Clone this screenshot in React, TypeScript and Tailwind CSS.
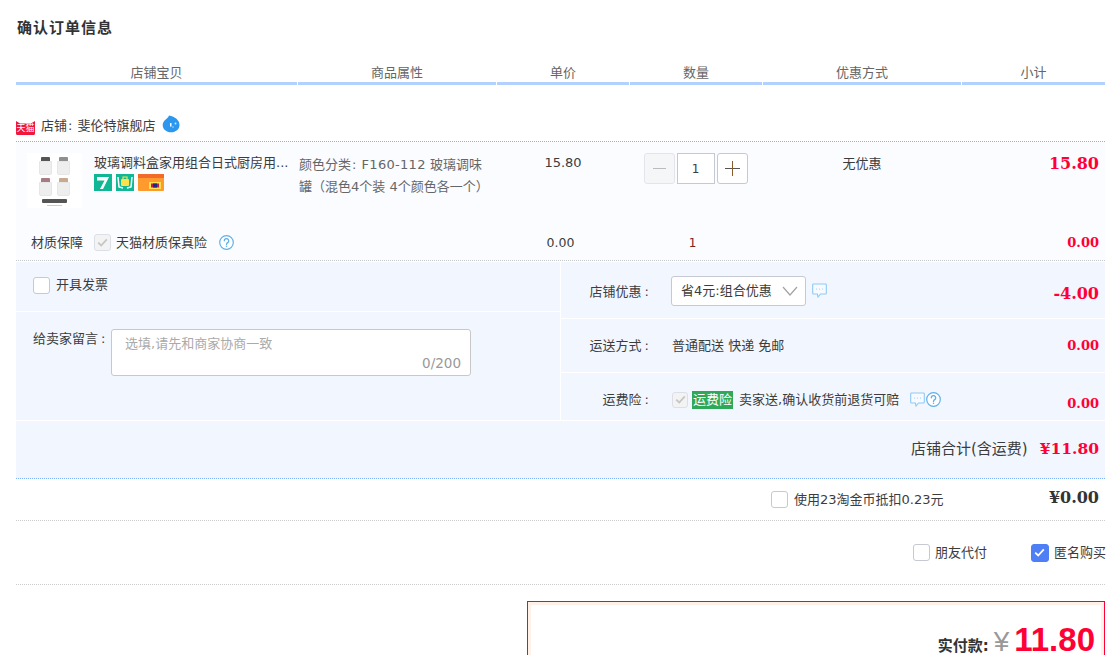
import React from "react";

const cols = "grid grid-cols-[281px_198px_132px_132px_198px_143px] gap-x-px";
const redNum = "[font-family:'DejaVu_Serif',serif] font-bold text-[#ff0036]";

function Bubble() {
  return (
    <svg width="15" height="15" viewBox="0 0 15 15" fill="none" className="shrink-0">
      <path d="M1.500 1h12a.8.8 0 0 1 .8.8v8.400a.8.8 0 0 1-.8.8H8.500L6 14l-.6-3H1.500a.8.8 0 0 1-.8-.8V1.800a.8.8 0 0 1 .8-.8z" stroke="#8ec9f5" strokeWidth="1.100" fill="#f7fbff" />
      <circle cx="4.500" cy="6" r=".6" fill="#8ec9f5" />
      <circle cx="7.500" cy="6" r=".6" fill="#8ec9f5" />
      <circle cx="10.500" cy="6" r=".6" fill="#8ec9f5" />
    </svg>
  );
}

function Help() {
  return (
    <svg width="15" height="15" viewBox="0 0 15 15" fill="none" className="shrink-0">
      <circle cx="7.500" cy="7.500" r="6.800" stroke="#5fb0ec" strokeWidth="1.200" fill="#fff" />
      <path d="M5.300 5.800a2.200 2.200 0 1 1 3.400 1.800c-.8.500-1.200.9-1.200 1.800" stroke="#5fb0ec" strokeWidth="1.300" strokeLinecap="round" />
      <circle cx="7.500" cy="11.300" r=".8" fill="#5fb0ec" />
    </svg>
  );
}

function Check({ state = "off", size = 17 }: { state?: "off" | "disabled" | "on"; size?: number }) {
  const box =
    state === "on"
      ? "bg-[#4f7ff5] border-[#4f7ff5]"
      : state === "disabled"
      ? "bg-[#f3f3f3] border-[#dcdfe6]"
      : "bg-white border-[#c5c9d3]";
  return (
    <span
      style={{ width: size, height: size }}
      className={`shrink-0 flex items-center justify-center rounded-[3px] border ${box}`}
    >
      {state !== "off" && (
        <svg width="11" height="9" viewBox="0 0 11 9" fill="none">
          <path d="M1.200 4.600 4.200 7.500 9.800 1.300" stroke={state === "on" ? "#fff" : "#c6c6c6"} strokeWidth="1.800" />
        </svg>
      )}
    </span>
  );
}

function Bottle({ cap }: { cap: string }) {
  return (
    <div className="w-[13px] h-[18px] flex flex-col items-center">
      <div className="w-[9px] h-[4px] rounded-t-[1px]" style={{ background: cap }} />
      <div className="w-[13px] h-[14px] rounded-b-[2px] bg-[#eeeeee] border border-[#e6e6e6]" />
    </div>
  );
}

function Product() {
  return (
    <div className="w-[55px] h-[55px] shrink-0 bg-white flex flex-col items-center pt-[4px]">
      <div className="grid grid-cols-2 gap-x-[5px] gap-y-[3px]">
        <Bottle cap="#555" />
        <Bottle cap="#8f8f8f" />
        <Bottle cap="#a87a84" />
        <Bottle cap="#c7aa90" />
      </div>
      <div className="w-[25px] h-[4px] mt-[3px] rounded-[1px] bg-[#555]" />
      <div className="w-[15px] h-px mt-[2px] bg-[#ccc]" />
    </div>
  );
}

function TmallLogo() {
  return (
    <span className="relative w-[19px] h-[15px] shrink-0 block">
      <svg width="19" height="15" viewBox="0 0 19 15" className="block">
        <path d="M0 1 4 3.500H15L19 1V13.500a1.500 1.500 0 0 1-1.500 1.500H1.500A1.500 1.500 0 0 1 0 13.500Z" fill="#f0173c" />
      </svg>
      <span className="absolute left-0 right-0 top-[3px] text-center text-[9px] leading-[11px] text-white whitespace-nowrap">天猫</span>
    </span>
  );
}

function Wangwang() {
  return (
    <svg width="19" height="20" viewBox="0 0 19 20" className="shrink-0 block">
      <path d="M7 1.500C6.500 3 5.500 4 4 5.200 1.800 6.800.7 8.800.7 11c0 4.200 3.700 7.300 8.400 7.300s8.400-3.100 8.400-7.300C17.500 6 13 2.800 7 1.500Z" fill="#2b97ee" />
      <rect x="8" y="9" width="1.500" height="3.500" fill="#fff" />
      <circle cx="13.500" cy="9.500" r="1" fill="#cfe8fc" />
      <circle cx="11" cy="13" r=".7" fill="#cfe8fc" />
    </svg>
  );
}

function Badges() {
  return (
    <div className="flex items-center mt-[2px]">
      <svg width="18" height="17" viewBox="0 0 18 17" className="block mr-1">
        <rect width="18" height="17" fill="#0fb795" />
        <path d="M3 3H15L9 15H6L10.500 6.500H3Z" fill="#fff" />
      </svg>
      <svg width="18" height="17" viewBox="0 0 18 17" className="block mr-1">
        <rect width="18" height="17" fill="#0fb795" />
        <path d="M2 3 3 13 7 14" stroke="#fff" strokeWidth="1.500" fill="none" />
        <path d="M16 3 15 13 11 14" stroke="#fff" strokeWidth="1.500" fill="none" />
        <rect x="5" y="5" width="8" height="7" rx="1" fill="#ffe04d" />
        <path d="M7 5V3h4v2" stroke="#ffe04d" strokeWidth="1.200" fill="none" />
      </svg>
      <svg width="26" height="17" viewBox="0 0 26 17" className="block">
        <rect width="26" height="17" rx="1" fill="#ff9a2e" />
        <rect width="26" height="4" fill="#f26a2a" />
        <rect x="11" y="8" width="12" height="7" fill="#ffe04d" />
        <rect x="13" y="9.500" width="8" height="4" fill="#c01b4a" />
        <rect x="15" y="9.500" width="4" height="4" fill="#1b2a8a" />
      </svg>
    </div>
  );
}

export default function App() {
  return (
    <div className="w-[1112px] h-[655px] overflow-hidden bg-white pl-4 pr-[7px] text-[13px] leading-[18px] text-[#3c3c3c] [font-family:'DejaVu_Sans','Noto_Sans_CJK_SC',sans-serif]">
      <div className="w-[1089px]">
        <h1 className="pt-[18px] pl-px h-[63px] text-[15px] leading-5 font-bold tracking-[1px] text-[#333]">确认订单信息</h1>

        <div className={cols}>
          {["店铺宝贝", "商品属性", "单价", "数量", "优惠方式", "小计"].map((t) => (
            <div key={t} className="h-[22px] pt-[1px] text-center text-[#666] border-b-[3px] border-[#b2d1ff]">
              {t}
            </div>
          ))}
        </div>

        <div className="h-[57px] flex items-end border-b border-dotted border-[#80b2ff] pb-[6px]">
          <TmallLogo />
          <span className="ml-[6px] whitespace-nowrap">店铺<span className="mx-px">:</span> 斐伦特旗舰店</span>
          <span className="ml-[6px] mb-[1px]"><Wangwang /></span>
        </div>

        <div className="bg-[#fbfcff] h-[119px] border-b border-dotted border-[#c8c8c8] flex flex-col">
          <div className={`${cols} h-[83px] pt-[12px]`}>
            <div className="flex pl-[11px] -mt-px">
              <Product />
              <div className="ml-3 mt-[1px]">
                <div className="whitespace-nowrap">玻璃调料盒家用组合日式厨房用...</div>
                <Badges />
              </div>
            </div>
            <div className="pl-[1px] pr-2 leading-[22px] text-[#666]">颜色分类<span className="mx-px">:</span> <span className="tracking-[0.3px]">F160-112</span> 玻璃调味罐（混色4个装 4个颜色各一个）</div>
            <div className="text-center">15.80</div>
            <div className="flex justify-center gap-[2px] -mt-px pr-[1px]">
              <div className="w-[31px] h-[31px] rounded-[3px] border border-[#e3e5ea] bg-[#f5f6f7] flex items-center justify-center">
                <div className="w-[13px] h-px bg-[#bbb]" />
              </div>
              <div className="w-[38px] h-[31px] border border-[#c5c9d3] bg-white flex items-center justify-center text-[12px]">1</div>
              <div className="w-[31px] h-[31px] rounded-[3px] border border-[#c5c9d3] bg-white flex items-center justify-center relative">
                <div className="w-[15px] h-px bg-[#555]" />
                <div className="absolute w-px h-[15px] bg-[#8a5a2a]" />
              </div>
            </div>
            <div className="text-center pt-[1px]">无优惠</div>
            <div className={`${redNum} text-[16px] text-right pr-[6px] pt-[1px]`}>15.80</div>
          </div>
          <div className={`${cols} items-center h-[35px]`}>
            <div className="flex items-center pl-[15px]">
              <span>材质保障</span>
              <span className="ml-[11px]"><Check state="disabled" /></span>
              <span className="ml-[5px]">天猫材质保真险</span>
              <span className="ml-3"><Help /></span>
            </div>
            <div />
            <div className="text-center pr-[5px] text-[12.5px]">0.00</div>
            <div className="text-center pr-[7px] text-[12px] text-[#7a2020]">1</div>
            <div />
            <div className={`${redNum} text-[13px] text-right pr-[6px]`}>0.00</div>
          </div>
        </div>

        <div className="mt-px bg-[#f2f6fe] h-[217px] border-b border-dotted border-[#80b2ff] flex flex-col">
          <div className="flex h-[159px] border-b border-white">
            <div className="w-[545px] border-r border-white flex flex-col">
              <div className="h-[50px] border-b border-white flex items-center pl-[17px] pb-[3px]">
                <Check />
                <span className="ml-[6px]">开具发票</span>
              </div>
              <div className="flex pl-[17px] pt-[17px]">
                <span className="w-[78px] pt-[1px] whitespace-nowrap">给卖家留言<span className="ml-[3px]">:</span></span>
                <div className="w-[360px] h-[47px] bg-white border border-[#c8c8c8] rounded-[3px] relative pl-[13px] pt-[5px] text-[#aaa]">
                  选填,请先和商家协商一致
                  <span className="absolute right-[9px] bottom-[3px] text-[13.500px] text-[#999]">0/200</span>
                </div>
              </div>
            </div>
            <div className="flex-1 flex flex-col">
              <div className="h-[57px] border-b border-white flex items-center pt-[2px]">
                <span className="w-[88px] text-right shrink-0 mt-[1px]">店铺优惠<span className="ml-[3px]">:</span></span>
                <div className="ml-[22px] w-[135px] h-[30px] bg-white border border-[#c5c9d3] rounded-[3px] flex items-center pl-[9px] whitespace-nowrap">
                  省4元:组合优惠
                  <svg width="16" height="10" viewBox="0 0 16 10" fill="none" className="ml-[10px]">
                    <path d="M1 1 8 9 15 1" stroke="#a3a3a3" strokeWidth="1.200" />
                  </svg>
                </div>
                <span className="ml-[6px] -mt-[1px]"><Bubble /></span>
                <span className={`${redNum} text-[16px] ml-auto pr-[6px] mt-[5px]`}>-4.00</span>
              </div>
              <div className="h-[54px] border-b border-white flex items-center">
                <span className="w-[88px] text-right shrink-0">运送方式<span className="ml-[3px]">:</span></span>
                <span className="ml-[23px] whitespace-pre">普通配送 快递 免邮</span>
                <span className={`${redNum} text-[13px] ml-auto pr-[6px]`}>0.00</span>
              </div>
              <div className="flex-1 flex items-center pt-[6px]">
                <span className="w-[88px] text-right shrink-0">运费险<span className="ml-[3px]">:</span></span>
                <span className="ml-[23px]"><Check state="disabled" size={16} /></span>
                <span className="ml-[4px] bg-[#2fa85a] text-white px-[1px] h-[18px] flex items-center">运费险</span>
                <span className="ml-[6px] whitespace-nowrap">卖家送,确认收货前退货可赔</span>
                <span className="ml-[11px]"><Bubble /></span>
                <span className="ml-[1px]"><Help /></span>
                <span className={`${redNum} text-[13px] ml-auto pr-[6px] mt-[9px]`}>0.00</span>
              </div>
            </div>
          </div>
          <div className="flex-1 flex items-center justify-end pr-[6px] pb-[1px]">
            <span className="text-[15px]">店铺合计(含运费)</span>
            <span className={`${redNum} text-[15.500px] ml-[12px]`}>¥11.80</span>
          </div>
        </div>

        <div className="h-[42px] border-b border-dotted border-[#ccc] flex items-center pl-[755px] pr-[6px]">
          <Check />
          <span className="ml-[6px] mt-[1px] whitespace-nowrap">使用23淘金币抵扣0.23元</span>
          <span className="ml-auto -mt-[4px] [font-family:'DejaVu_Serif',serif] font-bold text-[16px] text-[#333]">¥0.00</span>
        </div>

        <div className="h-[64px] border-b border-dotted border-[#ccc] flex items-center justify-end">
          <Check />
          <span className="ml-[5px]">朋友代付</span>
          <span className="ml-[44px]"><Check state="on" size={18} /></span>
          <span className="ml-[5px] -mr-px whitespace-nowrap">匿名购买</span>
        </div>

        <div className="ml-[511px] mt-[16px] h-[100px] border border-[#ff0036]">
          <div className="h-full border-[3px] border-[#fff0e8] bg-white flex justify-end items-baseline pr-[6px] pt-[16px]">
            <span className="font-bold text-[15px] text-[#333] whitespace-nowrap">实付款:</span>
            <span className="ml-[5px] text-[28px] leading-[38px] text-[#999] [font-family:'Liberation_Sans',sans-serif]">¥</span>
            <span className="ml-[5px] text-[33px] leading-[38px] font-bold text-[#ff0036] [font-family:'Liberation_Sans',sans-serif]">11.80</span>
          </div>
        </div>
      </div>
    </div>
  );
}
